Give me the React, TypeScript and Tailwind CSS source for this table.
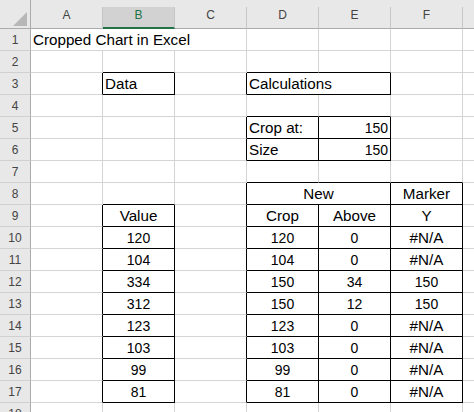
import React from "react";

type Cell = { text: string; align: "l" | "c" | "r"; num?: boolean };

const content: Record<string, Cell> = {
  "1-0": { text: "Cropped Chart in Excel", align: "l" },
  "3-1": { text: "Data", align: "l" },
  "3-3": { text: "Calculations", align: "l" },
  "5-3": { text: "Crop at:", align: "l" },
  "5-4": { text: "150", align: "r", num: true },
  "6-3": { text: "Size", align: "l" },
  "6-4": { text: "150", align: "r", num: true },
  "8-3": { text: "New", align: "c" },
  "8-5": { text: "Marker", align: "c" },
  "9-1": { text: "Value", align: "c" },
  "9-3": { text: "Crop", align: "c" },
  "9-4": { text: "Above", align: "c" },
  "9-5": { text: "Y", align: "c" },
};

const values = [120, 104, 334, 312, 123, 103, 99, 81];
const crop = [120, 104, 150, 150, 123, 103, 99, 81];
const above = [0, 0, 34, 12, 0, 0, 0, 0];
const marker = ["#N/A", "#N/A", "150", "150", "#N/A", "#N/A", "#N/A", "#N/A"];
values.forEach((v, i) => {
  const r = 10 + i;
  content[`${r}-1`] = { text: String(v), align: "c", num: true };
  content[`${r}-3`] = { text: String(crop[i]), align: "c", num: true };
  content[`${r}-4`] = { text: String(above[i]), align: "c", num: true };
  const m = marker[i];
  content[`${r}-5`] = { text: m, align: "c", num: m !== "#N/A" };
});

function boxed(r: number, c: number) {
  if (r === 3 && (c === 1 || c === 3 || c === 4)) return true;
  if ((r === 5 || r === 6) && (c === 3 || c === 4)) return true;
  if (r >= 9 && r <= 17 && c === 1) return true;
  if (r >= 8 && r <= 17 && c >= 3 && c <= 5) return true;
  return false;
}

function groups(r: number): [number, number][] {
  if (r === 1) return [[0, 2], [3, 3], [4, 4], [5, 5], [6, 6]];
  if (r === 3 || r === 8)
    return [[0, 0], [1, 1], [2, 2], [3, 4], [5, 5], [6, 6]];
  return [0, 1, 2, 3, 4, 5, 6].map((c) => [c, c] as [number, number]);
}

const spanClass: Record<number, string> = {
  1: "col-span-1",
  2: "col-span-2",
  3: "col-span-3",
};

const letters = ["A", "B", "C", "D", "E", "F", ""];

export default function App() {
  const rows = Array.from({ length: 18 }, (_, i) => i + 1);
  return (
    <div className="w-[474px] h-[412px] overflow-hidden bg-white font-['Liberation_Sans',Arial,sans-serif] text-black">
      <div className="grid grid-cols-[31px_repeat(6,72px)_11px] grid-rows-[29px_repeat(18,22px)]">
        {/* corner */}
        <div className="bg-[#e8e8e8] border-r border-b border-r-[#ababab] border-b-[#ababab]">
          <svg width="30" height="28" viewBox="0 0 30 28">
            <polygon points="27,12 27,26 13,26" fill="#b7b7b7" />
          </svg>
        </div>
        {letters.map((l, i) => (
          <div key={`h${i}`} className="bg-[#e8e8e8] flex flex-col">
            <div className="h-[7px]" />
            {i === 1 ? (
              <div className="flex-1 bg-[#d2d2d2] border-r border-r-[#c6c6c6] border-b-2 border-b-[#217346] text-center text-[12px] leading-[16px] text-[#217346]">
                {l}
              </div>
            ) : (
              <div
                className={
                  i === 6
                    ? "flex-1 border-b border-b-[#ababab]"
                    : "flex-1 border-r border-r-[#c6c6c6] border-b border-b-[#ababab] text-center text-[12px] leading-[16px] text-[#444]"
                }
              >
                {l}
              </div>
            )}
          </div>
        ))}
        {rows.map((r) => (
          <React.Fragment key={r}>
            <div className="bg-[#e8e8e8] border-r border-r-[#ababab] border-b border-b-[#d0d0d0] text-center text-[12px] leading-[22px] text-[#444]">
              {r}
            </div>
            {groups(r).map(([c0, c1]) => {
              const span = c1 - c0 + 1;
              let right = "border-r border-r-[#d4d4d4]";
              if (c1 === 6) right = "";
              else if (boxed(r, c1) || boxed(r, c1 + 1))
                right = "border-r border-r-black";
              let blackBottom = false;
              for (let c = c0; c <= c1; c++)
                if (boxed(r, c) || boxed(r + 1, c)) blackBottom = true;
              const bottom = blackBottom
                ? "border-b border-b-black"
                : "border-b border-b-[#d4d4d4]";
              const cell = content[`${r}-${c0}`];
              const align =
                cell?.align === "c"
                  ? "text-center"
                  : cell?.align === "r"
                  ? "text-right pr-[2px]"
                  : "text-left pl-[2px]";
              const size = cell?.num ? "text-[14px]" : "text-[15.2px]";
              return (
                <div
                  key={`${r}-${c0}`}
                  className={`${spanClass[span]} ${right} ${bottom} ${align} ${size} leading-[22px] whitespace-nowrap`}
                >
                  {cell?.text}
                </div>
              );
            })}
          </React.Fragment>
        ))}
      </div>
    </div>
  );
}
